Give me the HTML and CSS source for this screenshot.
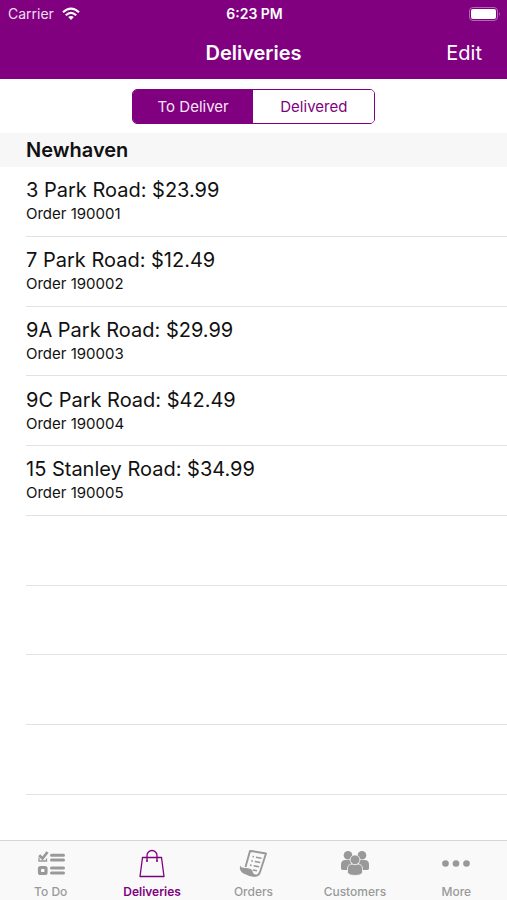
FILE: index.html
```html
<!DOCTYPE html>
<html lang="en">
<head>
<meta charset="utf-8">
<meta name="viewport" content="width=device-width, initial-scale=1">
<title>Deliveries</title>
<link rel="stylesheet" href="styles.css">
</head>
<body>
<header class="top">
  <div class="status">
    <span class="carrier">Carrier
      <svg width="18" height="14" viewBox="0 0 18 14" aria-hidden="true"><g fill="none" stroke="#fff" stroke-width="2.2"><path d="M1 5.2Q9-2 17 5.2"/><path d="M3.8 8.2Q9 3.6 14.2 8.2"/></g><path d="M6.2 10.1Q9 7.9 11.8 10.1L9 13z" fill="#fff"/></svg>
    </span>
    <span class="clock">6:23 PM</span>
    <svg class="battery" width="32" height="14" viewBox="0 0 32 14" aria-hidden="true"><rect x=".5" y=".5" width="28" height="13" rx="3.5" fill="none" stroke="#b566b5"/><rect x="2" y="2" width="25" height="10" rx="2" fill="#fff"/><path d="M30 5q1.6 2 0 4z" fill="#c68bc6"/></svg>
  </div>
  <div class="nav">
    <h1>Deliveries</h1>
    <button class="edit" type="button">Edit</button>
  </div>
</header>
<div class="filter">
  <div class="segments">
    <button class="segment selected" type="button" aria-pressed="true">To Deliver</button>
    <button class="segment" type="button" aria-pressed="false">Delivered</button>
  </div>
</div>
<main>
  <h2>Newhaven</h2>
  <ul class="list">
    <li><span class="title">3 Park Road: $23.99</span><span class="order">Order 190001</span></li>
    <li><span class="title">7 Park Road: $12.49</span><span class="order">Order 190002</span></li>
    <li><span class="title">9A Park Road: $29.99</span><span class="order">Order 190003</span></li>
    <li><span class="title">9C Park Road: $42.49</span><span class="order">Order 190004</span></li>
    <li><span class="title">15 Stanley Road: $34.99</span><span class="order">Order 190005</span></li>
    <li></li>
    <li></li>
    <li></li>
    <li></li>
  </ul>
</main>
<nav class="tabs">
  <a href="#todo">
    <svg width="30" height="30" viewBox="0 0 30 30" aria-hidden="true"><g fill="none" stroke="currentColor"><path d="M3 8.500V12h7.500V9.500" stroke-width="1.300"/><path d="M3.200 6.300l3.300 3.200L11.500 3" stroke-width="2.800"/><rect x="3.500" y="18.500" width="6.500" height="6" rx="1" stroke-width="3.200"/><path d="M15.500 6.300h12M15.500 11h12M15.500 19h12M15.500 24h12" stroke-width="3" stroke-linecap="round"/></g></svg>
    <span>To Do</span>
  </a>
  <a class="current" href="#deliveries" aria-current="page">
    <svg width="30" height="30" viewBox="0 0 30 30" aria-hidden="true"><g fill="none" stroke="currentColor" stroke-width="1.300" stroke-linejoin="round"><path d="M5.500 8.500h19L27 27.500H3z"/><path d="M10 12V6.500a5 5 0 0 1 10 0V12"/></g><circle cx="10" cy="12" r="1" fill="currentColor"/><circle cx="20" cy="12" r="1" fill="currentColor"/></svg>
    <span>Deliveries</span>
  </a>
  <a href="#orders">
    <svg width="30" height="30" viewBox="0 0 30 30" aria-hidden="true"><g fill="none" stroke="currentColor" stroke-width="1.900" stroke-linejoin="round"><path d="M7.500 18L12 2Q20 2.800 28 4.500L22 23Q20.500 27.500 16.500 26.500"/><path d="M14.500 7.500l1.500.3M18 8.200l5.500 1M13.300 11.800l1.500.3M16.800 12.500l5.500 1M12.100 16.100l1.500.3M15.600 16.800l5.500 1M15 21l4 .8" stroke-width="1.600"/></g><path d="M2 16.500Q3 19 7.500 19Q13 19 14.500 21.500Q14.300 25 18 25.800L16.500 28Q10 27 5 24.200Q1 21.500 2 16.500z" fill="currentColor"/></svg>
    <span>Orders</span>
  </a>
  <a href="#customers">
    <svg width="30" height="30" viewBox="0 0 30 30" aria-hidden="true"><g fill="currentColor"><circle cx="8" cy="6.300" r="4.300"/><circle cx="22" cy="6.300" r="4.300"/><path d="M1 19.500v-4Q1 11 5.500 11H11v10H4.500Q1 21 1 19.500zM29 19.500v-4Q29 11 24.500 11H19v10h6.500Q29 21 29 19.500z"/></g><g fill="currentColor" stroke="#f9f9f9" stroke-width=".8"><path d="M7.500 24v-4Q7.500 15 12.500 15h5q5 0 5 5v4Q20.500 26.500 15 26.500T7.500 24z"/><circle cx="15" cy="10.800" r="4.900"/></g></svg>
    <span>Customers</span>
  </a>
  <a href="#more">
    <svg width="30" height="30" viewBox="0 0 30 30" aria-hidden="true"><g fill="currentColor"><circle cx="4.500" cy="14.500" r="3.300"/><circle cx="15" cy="14.500" r="3.300"/><circle cx="25.500" cy="14.500" r="3.300"/></g></svg>
    <span>More</span>
  </a>
</nav>
</body>
</html>
```

FILE: styles.css
```css
* { box-sizing: border-box; }

body {
  margin: 0;
  min-height: 100vh;
  display: flex;
  flex-direction: column;
  background: #fff;
  color: #111;
  font-family: Inter, "Liberation Sans", sans-serif;
}

button { font-family: inherit; cursor: pointer; }

.top {
  background: #800080;
  color: #fff;
}

.status, .nav {
  display: grid;
  grid-template-columns: 1fr auto 1fr;
  align-items: center;
}

.status {
  height: 27px;
  padding: 0 6px 0 8px;
  font-size: 14px;
}

.carrier {
  display: flex;
  align-items: center;
  gap: 8px;
  color: #f1dff1;
}

.clock { font-weight: 600; }
.battery { justify-self: end; }

.nav {
  height: 52px;
  padding: 0 25px;
}

h1 {
  grid-column: 2;
  margin: 0;
  font-size: 20px;
  font-weight: 600;
}

.edit {
  justify-self: end;
  padding: 0;
  border: 0;
  background: none;
  color: #fff;
  font-size: 20px;
}

.filter {
  display: flex;
  justify-content: center;
  padding: 10px 0 9px;
}

.segments {
  display: grid;
  grid-template-columns: 1fr 1fr;
  width: 48%;
  height: 35px;
  border: 1px solid #800080;
  border-radius: 5px;
  overflow: hidden;
}

.segment {
  border: 0;
  padding: 0;
  background: #fff;
  color: #800080;
  font-size: 15px;
}

.segment.selected {
  background: #800080;
  color: #f7e6f7;
}

main {
  flex: 1;
  display: flex;
  flex-direction: column;
}

h2 {
  margin: 0;
  padding: 1px 26px 0;
  background: #f7f7f7;
  font-size: 20px;
  font-weight: 600;
  line-height: 33px;
}

.list {
  flex: 1;
  display: grid;
  grid-template-rows: repeat(9, 1fr) 45px;
  margin: 0;
  padding: 0 0 0 26px;
  list-style: none;
}

.list li {
  display: flex;
  flex-direction: column;
  justify-content: center;
  min-height: 60px;
  padding-bottom: 2px;
  border-bottom: 1px solid #e2e2e2;
}

.title {
  font-size: 20px;
  line-height: 28px;
}

.order {
  font-size: 15px;
  line-height: 20px;
}

.tabs {
  display: grid;
  grid-template-columns: repeat(5, 1fr);
  height: 60px;
  border-top: 1px solid #d5d5d5;
  background: #f9f9f9;
}

.tabs a {
  display: flex;
  flex-direction: column;
  align-items: center;
  gap: 6px;
  padding-top: 8px;
  color: #999;
  font-size: 12px;
  font-weight: 500;
  line-height: 14px;
  text-decoration: none;
}

.tabs .current {
  color: #800080;
  font-weight: 600;
}
```
